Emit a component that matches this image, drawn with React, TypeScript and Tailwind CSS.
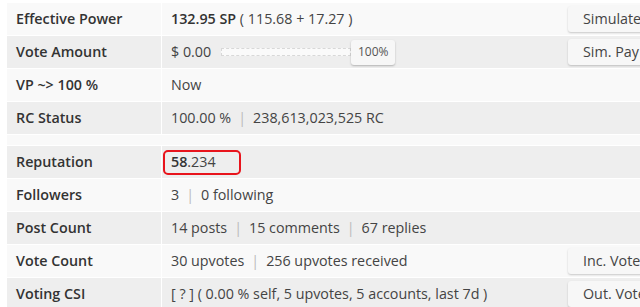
import React from 'react'

type Row = {
  label?: string
  value?: React.ReactNode
  action?: string
  spacer?: boolean
}

const Sep = () => <span className="mx-[7px] text-[#bbbbbb]">|</span>

const VoteSlider = () => (
  <div className="flex items-center">
    <span>$ 0.00</span>
    <div className="ml-[10px] flex items-center">
      <div className="h-[8px] w-[130px] border border-dashed border-[#d8d8d8] bg-[#fafafa]" />
      <div className="flex h-[25px] w-[44px] items-center justify-center rounded-[3px] bg-[#f7f7f7] text-[12px] text-[#555] shadow-[0_1px_2px_rgba(0,0,0,0.25)]">
        100%
      </div>
    </div>
  </div>
)

const rows: Row[] = [
  {
    label: 'Effective Power',
    value: (
      <span>
        <span className="font-semibold text-[#333]">132.95 SP</span> ( 115.68 + 17.27 )
      </span>
    ),
    action: 'Simulate',
  },
  { label: 'Vote Amount', value: <VoteSlider />, action: 'Sim. Pay' },
  { label: 'VP ~> 100 %', value: 'Now' },
  {
    label: 'RC Status',
    value: (
      <span>
        100.00 %<Sep />238,613,023,525 RC
      </span>
    ),
  },
  { spacer: true },
  {
    label: 'Reputation',
    value: (
      <span className="-ml-[8px] flex h-[25px] w-[78px] items-center rounded-[5px] border-2 border-[#e8141c] pl-[6px]">
        <span className="font-semibold text-[#333]">58</span>.234
      </span>
    ),
  },
  {
    label: 'Followers',
    value: (
      <span>
        3<Sep />0 following
      </span>
    ),
  },
  {
    label: 'Post Count',
    value: (
      <span>
        14 posts<Sep />15 comments<Sep />67 replies
      </span>
    ),
  },
  {
    label: 'Vote Count',
    value: (
      <span>
        30 upvotes<Sep />256 upvotes received
      </span>
    ),
    action: 'Inc. Votes',
  },
  {
    label: 'Voting CSI',
    value: '[ ? ] ( 0.00 % self, 5 upvotes, 5 accounts, last 7d )',
    action: 'Out. Votes',
  },
]

export default function App() {
  return (
    <div
      className="h-[307px] w-[640px] overflow-hidden bg-white pl-[7px] pt-[3px] text-[14.3px] text-[#444]"
      style={{ fontFamily: '"Open Sans", "Liberation Sans", sans-serif' }}
    >
      <div className="w-[760px]">
        {rows.map((row, i) => {
          const bg = i % 2 === 0 ? 'bg-[#f9f9f9]' : 'bg-[#eeeeee]'
          if (row.spacer) {
            return <div key={i} className={`h-[11px] border-b border-white ${bg}`} />
          }
          return (
            <div key={i} className={`flex h-[33px] border-b border-white ${bg}`}>
              <div className="flex w-[155px] shrink-0 items-center border-r border-white pl-[9px] font-semibold text-[#333]">
                {row.label}
              </div>
              <div className="flex flex-1 items-center pl-[9px]">{row.value}</div>
              <div className="flex w-[201px] shrink-0 items-center pl-[2px]">
                {row.action && (
                  <div className="flex h-[26px] w-[120px] items-center rounded-[3px] bg-[#f7f7f7] pl-[15px] text-[#444] shadow-[0_1px_2px_rgba(0,0,0,0.2)]">
                    {row.action}
                  </div>
                )}
              </div>
            </div>
          )
        })}
      </div>
    </div>
  )
}
